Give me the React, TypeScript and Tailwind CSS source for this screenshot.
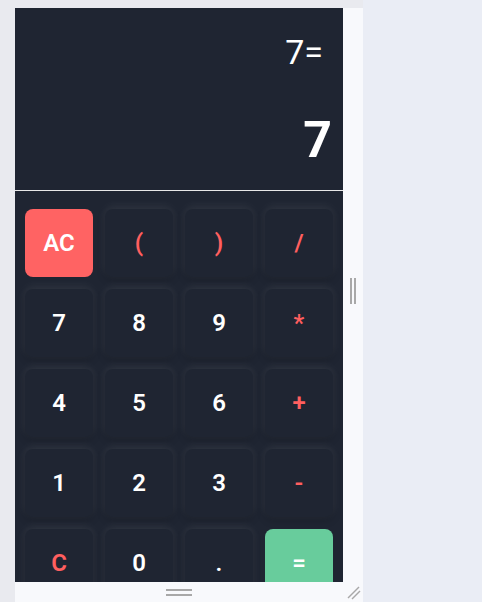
import React from "react";

type Key = { label: string; kind: "num" | "op" | "clear" | "equals" };

const keys: Key[] = [
  { label: "AC", kind: "clear" },
  { label: "(", kind: "op" },
  { label: ")", kind: "op" },
  { label: "/", kind: "op" },
  { label: "7", kind: "num" },
  { label: "8", kind: "num" },
  { label: "9", kind: "num" },
  { label: "*", kind: "op" },
  { label: "4", kind: "num" },
  { label: "5", kind: "num" },
  { label: "6", kind: "num" },
  { label: "+", kind: "op" },
  { label: "1", kind: "num" },
  { label: "2", kind: "num" },
  { label: "3", kind: "num" },
  { label: "-", kind: "op" },
  { label: "C", kind: "op" },
  { label: "0", kind: "num" },
  { label: ".", kind: "num" },
  { label: "=", kind: "equals" },
];

function keyClass(kind: Key["kind"]): string {
  switch (kind) {
    case "clear":
      return "bg-[#ff6363] text-white";
    case "equals":
      return "bg-[#68cc9c] text-white";
    case "op":
      return "bg-[#1f2532] text-[#ff5f5f] shadow-[0_-2px_10px_rgba(255,255,255,0.09),0_3px_8px_rgba(0,0,0,0.2)]";
    default:
      return "bg-[#1f2532] text-white shadow-[0_-2px_10px_rgba(255,255,255,0.09),0_3px_8px_rgba(0,0,0,0.2)]";
  }
}

export default function App(): React.ReactElement {
  return (
    <div className="flex h-[602px] w-[482px] overflow-hidden bg-[#eaedf5] font-['Roboto',sans-serif]">
      <div className="flex w-[363px] shrink-0 bg-[#e9eaef] pl-[15px] pt-2">
        <div className="flex w-[348px] flex-col bg-[#f8f9fc]">
          <div className="flex">
            {/* calculator */}
            <div className="flex h-[574px] w-[328px] flex-col overflow-hidden bg-[#1f2532]">
              <div className="flex h-[183px] shrink-0 flex-col items-end border-b border-[#e8e8e8] pr-[11px]">
                <div className="mt-[27px] mr-[9px] text-[34px] font-normal leading-[34px] text-white">7=</div>
                <div className="mt-[46px] text-[50px] font-bold leading-[50px] text-white">7</div>
              </div>
              <div className="grid shrink-0 grid-cols-4 gap-3 px-[10px] pt-[18px]">
                {keys.map((k) => (
                  <div
                    key={k.label}
                    className={`flex h-[68px] items-center justify-center rounded-lg text-2xl font-semibold ${keyClass(k.kind)}`}
                  >
                    {k.label}
                  </div>
                ))}
              </div>
            </div>
            {/* right resize handle */}
            <div className="flex w-5 items-center justify-center">
              <div className="mt-[-8px] flex gap-[2px]">
                <div className="h-[26px] w-[2px] bg-[#a8a8a8]" />
                <div className="h-[26px] w-[2px] bg-[#a8a8a8]" />
              </div>
            </div>
          </div>
          {/* bottom resize handle */}
          <div className="relative flex h-5 items-center">
            <div className="ml-[151px] flex w-[26px] flex-col gap-[3px]">
              <div className="h-[2px] bg-[#a8a8a8]" />
              <div className="h-[2px] bg-[#a8a8a8]" />
            </div>
            <svg className="absolute right-[2px] bottom-[2px] h-[14px] w-[14px]" viewBox="0 0 14 14">
              <line x1="1" y1="12" x2="12" y2="1" stroke="#a8a8a8" strokeWidth="1.5" />
              <line x1="5" y1="13" x2="13" y2="5" stroke="#a8a8a8" strokeWidth="1.5" />
            </svg>
          </div>
        </div>
      </div>
    </div>
  );
}
